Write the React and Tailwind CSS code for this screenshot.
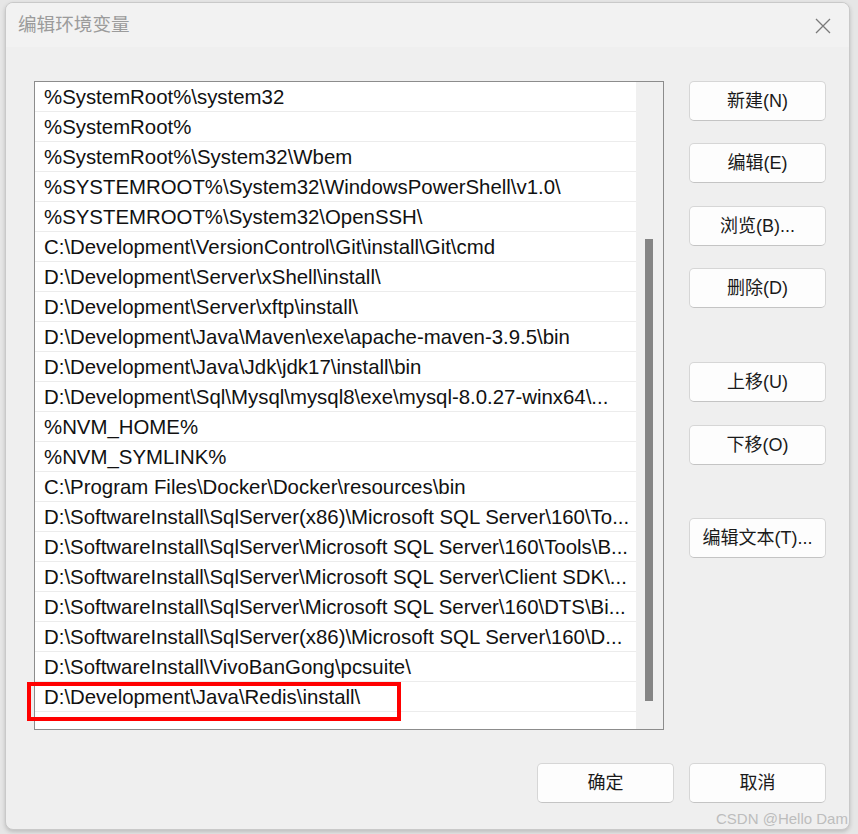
const paths = [
  "%SystemRoot%\\system32",
  "%SystemRoot%",
  "%SystemRoot%\\System32\\Wbem",
  "%SYSTEMROOT%\\System32\\WindowsPowerShell\\v1.0\\",
  "%SYSTEMROOT%\\System32\\OpenSSH\\",
  "C:\\Development\\VersionControl\\Git\\install\\Git\\cmd",
  "D:\\Development\\Server\\xShell\\install\\",
  "D:\\Development\\Server\\xftp\\install\\",
  "D:\\Development\\Java\\Maven\\exe\\apache-maven-3.9.5\\bin",
  "D:\\Development\\Java\\Jdk\\jdk17\\install\\bin",
  "D:\\Development\\Sql\\Mysql\\mysql8\\exe\\mysql-8.0.27-winx64\\...",
  "%NVM_HOME%",
  "%NVM_SYMLINK%",
  "C:\\Program Files\\Docker\\Docker\\resources\\bin",
  "D:\\SoftwareInstall\\SqlServer(x86)\\Microsoft SQL Server\\160\\To...",
  "D:\\SoftwareInstall\\SqlServer\\Microsoft SQL Server\\160\\Tools\\B...",
  "D:\\SoftwareInstall\\SqlServer\\Microsoft SQL Server\\Client SDK\\...",
  "D:\\SoftwareInstall\\SqlServer\\Microsoft SQL Server\\160\\DTS\\Bi...",
  "D:\\SoftwareInstall\\SqlServer(x86)\\Microsoft SQL Server\\160\\D...",
  "D:\\SoftwareInstall\\VivoBanGong\\pcsuite\\",
  "D:\\Development\\Java\\Redis\\install\\",
];

const font = { fontFamily: '"Liberation Sans", "Noto Sans CJK SC", sans-serif' };

function Btn({ children, className = "" }) {
  return (
    <button
      className={`w-[137px] h-[40px] rounded-[5px] border border-[#d6d6d6] border-b-[#c4c4c4] bg-[#fdfdfd] text-[18px] text-[#1a1a1a] flex items-center justify-center ${className}`}
    >
      {children}
    </button>
  );
}

export default function App() {
  return (
    <div className="relative w-[858px] h-[834px] bg-[#e6e6e6] pt-[2px] pl-[5px] overflow-hidden" style={font}>
      <div className="w-[845px] h-[828px] rounded-[8px] border border-[#c9c9c9] bg-[#efefef] shadow-[0_2px_4px_rgba(0,0,0,0.18)] flex flex-col overflow-hidden">
        {/* title bar */}
        <div className="h-[44px] shrink-0 bg-[#f2f2f2] flex items-center justify-between pl-[12px] pr-[18px]">
          <span className="text-[18.6px] text-[#9b9b9b]">编辑环境变量</span>
          <svg width="16" height="16" viewBox="0 0 16 16" className="mt-[1px]">
            <path d="M1 1 L15 15 M15 1 L1 15" stroke="#7a7a7a" strokeWidth="1.3" fill="none" />
          </svg>
        </div>

        {/* list + side buttons */}
        <div className="flex pl-[28px] pt-[34px]">
          <div className="w-[630px] h-[649px] border border-[#8c8c8c] bg-white flex">
            <div className="flex-1 flex flex-col">
              {paths.map((p) => (
                <div
                  key={p}
                  className="h-[30px] shrink-0 border-b border-[#ececec] pl-[9px] text-[20.4px] leading-[31px] text-[#111] whitespace-nowrap overflow-hidden"
                >
                  {p}
                </div>
              ))}
            </div>
            <div className="w-[27px] bg-[#f0f0f0] pt-[157px]">
              <div className="ml-[9px] w-[8px] h-[462px] bg-[#858585]" />
            </div>
          </div>

          <div className="ml-[25px] flex flex-col">
            <Btn>新建(N)</Btn>
            <Btn className="mt-[22px]">编辑(E)</Btn>
            <Btn className="mt-[23px]">浏览(B)...</Btn>
            <Btn className="mt-[22px]">删除(D)</Btn>
            <Btn className="mt-[54px]">上移(U)</Btn>
            <Btn className="mt-[23px]">下移(O)</Btn>
            <Btn className="mt-[53px]">编辑文本(T)...</Btn>
          </div>
        </div>

        {/* dialog actions */}
        <div className="flex justify-end gap-[15px] pr-[23px] mt-[33px]">
          <Btn>确定</Btn>
          <Btn>取消</Btn>
        </div>
      </div>

      {/* highlight around the new entry */}
      <div className="absolute left-[27px] top-[682px] w-[374px] h-[39px] border-[4px] border-[#f00]" />

      <span className="absolute left-[716px] top-[808px] text-[15px] text-[#bdbdbd] whitespace-nowrap">
        CSDN @Hello Dam
      </span>
    </div>
  );
}
